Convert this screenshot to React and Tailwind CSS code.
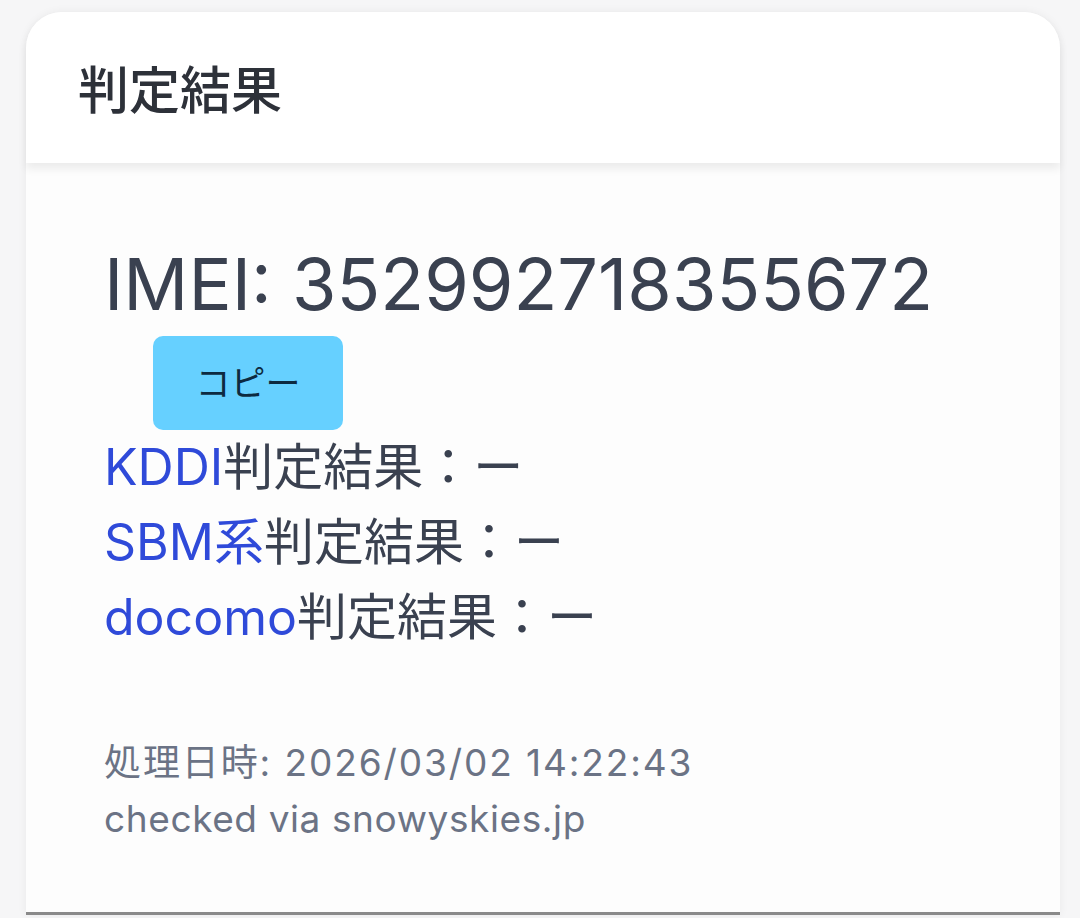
import React from "react";

const results = [
  { name: "KDDI", label: "判定結果：ー" },
  { name: "SBM系", label: "判定結果：ー" },
  { name: "docomo", label: "判定結果：ー" },
];

export default function App() {
  return (
    <div
      className="h-[918px] overflow-hidden bg-[#f6f6f7] pt-[12px] pl-[26px] pr-[20px]"
      style={{ fontFamily: 'Inter, "Noto Sans CJK JP", sans-serif' }}
    >
      <div className="relative h-[903px] rounded-t-[36px] bg-[#fdfdfd] shadow-[0_0_10px_rgba(0,0,0,0.06)] border-b-[3px] border-[#8a8a8a]">
        <div className="relative z-10 flex h-[151px] items-center rounded-t-[36px] bg-white px-[52px] pt-[6px] shadow-[0_6px_8px_rgba(0,0,0,0.07)]">
          <h1 className="text-[51px] font-medium leading-none text-[#2d3139]">
            判定結果
          </h1>
        </div>

        <div className="pl-[78px] pt-[79px]">
          <p className="text-[72px] leading-[84px] text-[#3a4150]">
            IMEI: 352992718355672
          </p>
          <button
            type="button"
            className="ml-[49px] mt-[10px] flex h-[94px] w-[190px] items-center justify-center rounded-[10px] bg-[#66d0ff] text-[35px] text-[#0d2a40]"
          >
            コピー
          </button>

          <div className="text-[50px] leading-[75px] text-[#3a4150]">
            {results.map((r) => (
              <p key={r.name}>
                <span className="text-[#2f4ad9]">{r.name}</span>
                {r.label}
              </p>
            ))}
          </div>

          <div className="mt-[80px] text-[37px] leading-[56px] text-[#6b7385]">
            <p className="tracking-[1.9px]">処理日時: 2026/03/02 14:22:43</p>
            <p className="tracking-[0.6px]">checked via snowyskies.jp</p>
          </div>
        </div>
      </div>
    </div>
  );
}
